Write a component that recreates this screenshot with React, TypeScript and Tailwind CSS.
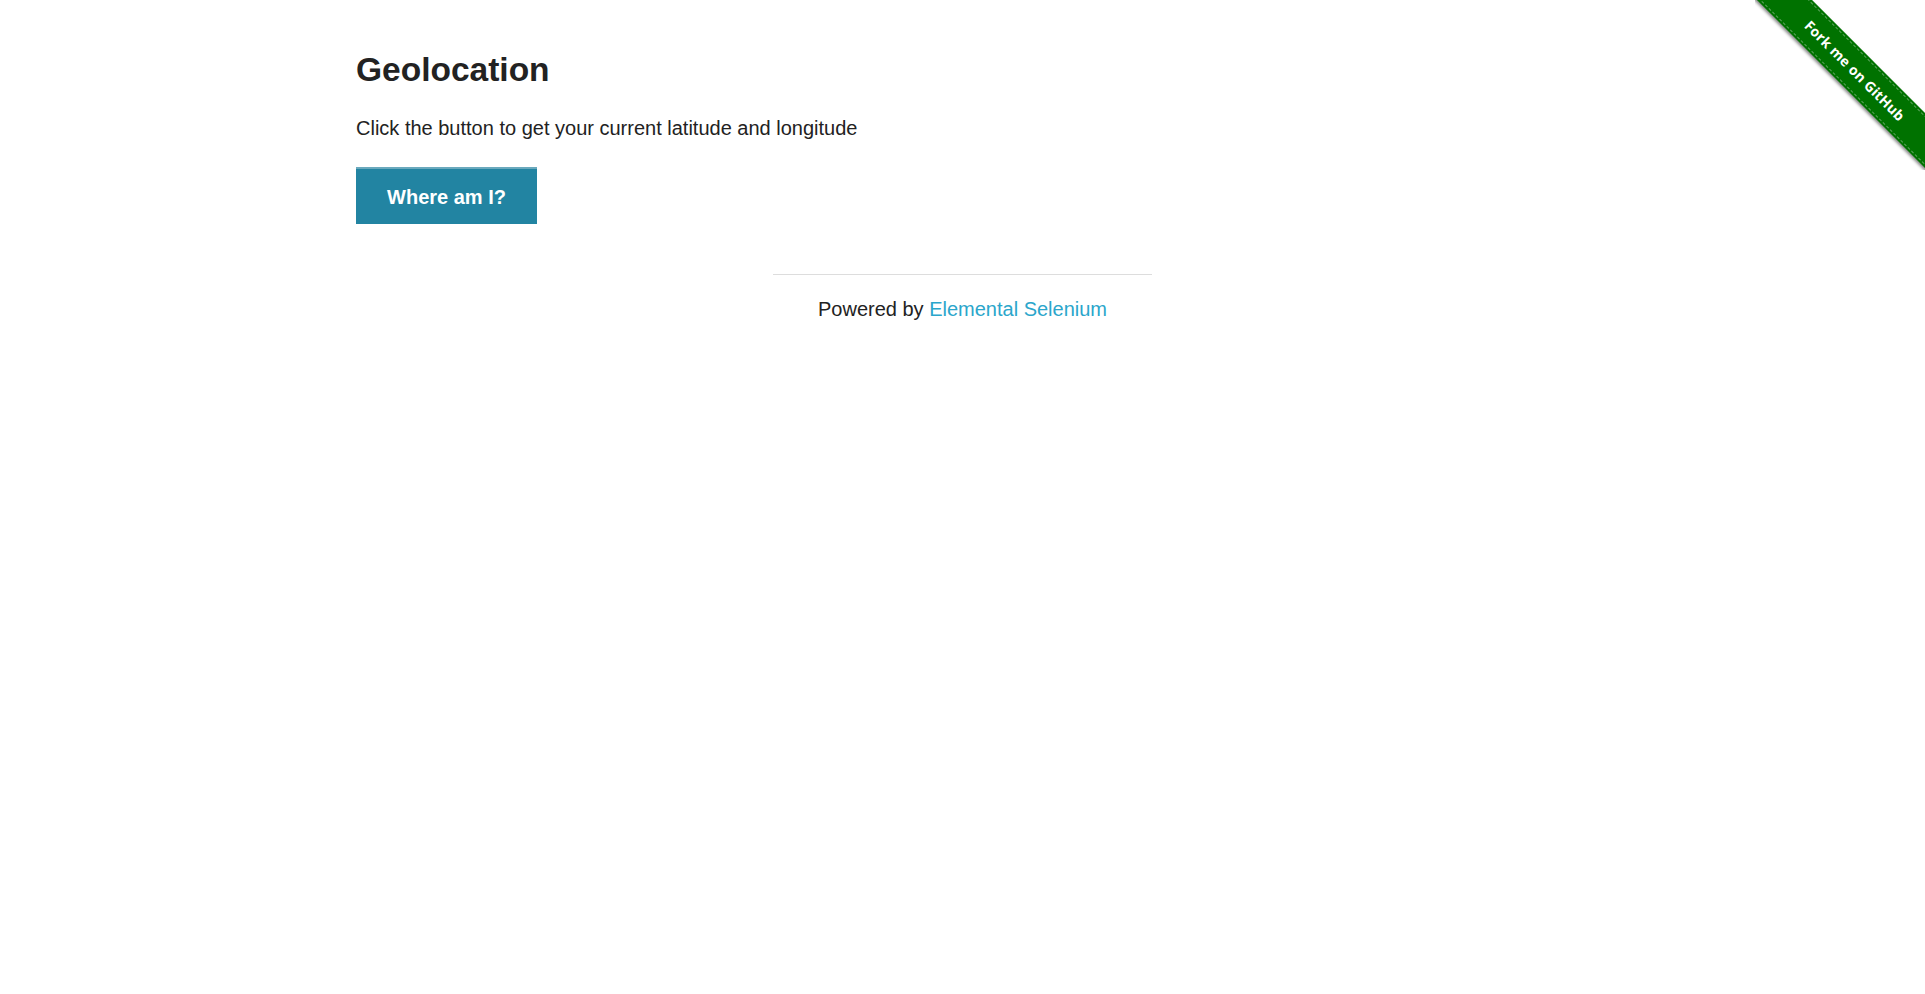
export default function App() {
  return (
    <div className="relative min-h-screen bg-white text-[#222] overflow-hidden" style={{ fontFamily: '"Liberation Sans", Arial, sans-serif' }}>
      {/* fork ribbon */}
      <a href="#" className="absolute top-0 right-0 w-[170px] h-[170px] overflow-hidden block">
        <div className="absolute left-[-30px] top-[51px] w-[260px] h-[39px] rotate-45 bg-[#007200] shadow-[0_2px_3px_rgba(0,0,0,0.45)] flex items-center justify-center">
          <div className="absolute inset-x-0 top-[2px] border-t border-dashed border-white/35"></div>
          <div className="absolute inset-x-0 bottom-[2px] border-b border-dashed border-white/35"></div>
          <span className="text-white text-[14px] font-bold tracking-[0.2px]" style={{ fontFamily: '"Open Sans", "DejaVu Sans", sans-serif' }}>
            Fork me on GitHub
          </span>
        </div>
      </a>

      <div className="w-[1213px] mx-auto pt-[50px] flex flex-col items-start">
        <h3 className="text-[33.5px] leading-[40px] font-bold text-[#222]">Geolocation</h3>
        <p className="mt-[26px] text-[20px] leading-[24px]">Click the button to get your current latitude and longitude</p>
        <button className="mt-[27px] w-[181px] h-[57px] bg-[#2284a2] border-t-[2px] border-[#6aa9bd] text-white text-[20px] font-bold">
          Where am I?
        </button>
      </div>

      <div className="flex flex-col items-center mt-[50px]">
        <div className="w-[379px] border-t border-[#dddddd]"></div>
        <div className="mt-[22px] text-[20px] leading-[24px]">
          Powered by <a href="#" className="text-[#2ba6cb]">Elemental Selenium</a>
        </div>
      </div>
    </div>
  );
}
